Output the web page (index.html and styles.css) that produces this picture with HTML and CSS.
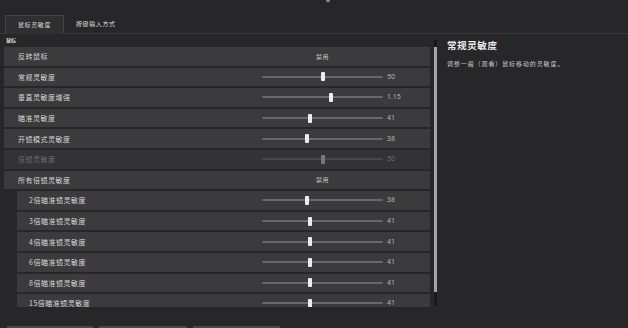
FILE: index.html
```html
<!DOCTYPE html>
<html lang="zh-CN">
<head>
<meta charset="utf-8">
<link rel="stylesheet" href="styles.css">
</head>
<body>
<div class="topbar"><span class="marker"></span></div>
<div class="tabs">
  <div class="tab active">鼠标灵敏度</div>
  <div class="tab">按键输入方式</div>
</div>
<div class="main">
  <div class="left">
    <div class="section-label">鼠标</div>
    <div class="list">
      <div class="row"><span class="label">反转鼠标</span><div class="control"><span class="toggle">禁用</span></div></div>
      <div class="row"><span class="label">常规灵敏度</span><div class="control"><div class="track"><span class="thumb" style="left:50%"></span></div><span class="value">50</span></div></div>
      <div class="row"><span class="label">垂直灵敏度增强</span><div class="control"><div class="track"><span class="thumb" style="left:57%"></span></div><span class="value">1.15</span></div></div>
      <div class="row"><span class="label">瞄准灵敏度</span><div class="control"><div class="track"><span class="thumb" style="left:40%"></span></div><span class="value">41</span></div></div>
      <div class="row"><span class="label">开镜模式灵敏度</span><div class="control"><div class="track"><span class="thumb" style="left:37%"></span></div><span class="value">38</span></div></div>
      <div class="row disabled"><span class="label">倍镜灵敏度</span><div class="control"><div class="track"><span class="thumb" style="left:50%"></span></div><span class="value">50</span></div></div>
      <div class="row"><span class="label">所有倍镜灵敏度</span><div class="control"><span class="toggle">禁用</span></div></div>
      <div class="row sub"><span class="label">2倍瞄准镜灵敏度</span><div class="control"><div class="track"><span class="thumb" style="left:37%"></span></div><span class="value">38</span></div></div>
      <div class="row sub"><span class="label">3倍瞄准镜灵敏度</span><div class="control"><div class="track"><span class="thumb" style="left:40%"></span></div><span class="value">41</span></div></div>
      <div class="row sub"><span class="label">4倍瞄准镜灵敏度</span><div class="control"><div class="track"><span class="thumb" style="left:40%"></span></div><span class="value">41</span></div></div>
      <div class="row sub"><span class="label">6倍瞄准镜灵敏度</span><div class="control"><div class="track"><span class="thumb" style="left:40%"></span></div><span class="value">41</span></div></div>
      <div class="row sub"><span class="label">8倍瞄准镜灵敏度</span><div class="control"><div class="track"><span class="thumb" style="left:40%"></span></div><span class="value">41</span></div></div>
      <div class="row sub"><span class="label">15倍瞄准镜灵敏度</span><div class="control"><div class="track"><span class="thumb" style="left:40%"></span></div><span class="value">41</span></div></div>
    </div>
  </div>
  <div class="scrollbar"><div class="scroll-thumb"></div></div>
  <div class="detail">
    <div class="detail-title">常规灵敏度</div>
    <div class="detail-text">调整一般（观看）鼠标移动的灵敏度。</div>
  </div>
</div>
<div class="footer">
  <span class="fbtn b1"></span>
  <span class="fbtn b2"></span>
  <span class="fbtn b3"></span>
</div>
</body>
</html>
```

FILE: styles.css
```css
* { box-sizing: border-box; }
html, body { margin: 0; padding: 0; }
body {
  width: 628px;
  height: 328px;
  overflow: hidden;
  background: #27272a;
  font-family: "Noto Sans CJK SC", "Noto Sans", "Liberation Sans", sans-serif;
  color: #cfcfcf;
}
.topbar {
  height: 15px;
  position: relative;
}
.marker {
  position: absolute;
  left: 326px;
  top: 0;
  width: 4px;
  height: 2px;
  background: #8a8a8a;
  border-radius: 1px;
}
.tabs {
  height: 19px;
  display: flex;
  align-items: stretch;
  padding-left: 5px;
  border-bottom: 1px solid #3b3b3d;
}
.tab {
  font-size: 6px;
  letter-spacing: 0.6px;
  line-height: 18px;
  padding: 0 10px 0 12px;
  color: #dcdcdc;
  margin-bottom: -1px;
}
.tab.active {
  background: #2f2f32;
  border: 1px solid #444446;
  border-bottom: 1px solid #2f2f32;
  width: 59px;
  padding: 0 0 0 12px;
}
.main {
  height: 292px;
  display: flex;
}
.left {
  width: 430px;
  padding-left: 4px;
  display: flex;
  flex-direction: column;
}
.section-label {
  height: 13px;
  font-size: 5px;
  line-height: 12px;
  padding-left: 2px;
  color: #d8d8d8;
  font-weight: bold;
}
.list {
  height: 260px;
  overflow: hidden;
  display: flex;
  flex-direction: column;
  gap: 2px;
}
.row {
  flex: 0 0 18.6px;
  height: 18.6px;
  background: #3b3b3d;
  display: flex;
  align-items: center;
  justify-content: space-between;
  padding-left: 14px;
}
.row.sub {
  margin-left: 13px;
  padding-left: 12px;
}
.row.disabled {
  background: #333335;
}
.label {
  font-size: 7px;
  letter-spacing: 0.5px;
  color: #d4d4d4;
  white-space: nowrap;
}
.control {
  width: 168px;
  display: flex;
  align-items: center;
}
.track {
  position: relative;
  width: 121px;
  height: 2px;
  background: #68686a;
  border-radius: 1px;
}
.thumb {
  position: absolute;
  top: -3.5px;
  width: 4px;
  height: 9px;
  background: #ececec;
  border-radius: 1px;
  transform: translateX(-50%);
}
.value {
  margin-left: 4px;
  font-size: 7px;
  color: #b0b0b0;
  font-family: "Roboto", "Liberation Sans", sans-serif;
}
.toggle {
  width: 121px;
  text-align: center;
  font-size: 6px;
  letter-spacing: 0.5px;
  color: #c4c4c4;
}
.row.disabled .label,
.row.disabled .value { color: #6c6c6e; }
.row.disabled .track { background: #48484a; }
.row.disabled .thumb { background: #78787a; }
.scrollbar {
  width: 3px;
  margin-left: 4px;
  margin-top: 6px;
  height: 266px;
  background: #18181a;
  display: flex;
  flex-direction: column;
}
.scroll-thumb {
  margin-top: 7px;
  height: 245px;
  background: #a4a4a6;
}
.detail {
  flex: 1;
  padding-left: 10px;
  padding-top: 4px;
}
.detail-title {
  font-size: 9.5px;
  font-weight: bold;
  letter-spacing: 0.6px;
  color: #ececec;
  line-height: 14px;
}
.detail-text {
  margin-top: 7px;
  font-size: 6px;
  letter-spacing: 0.9px;
  color: #c8c8c8;
  line-height: 10px;
}
.footer {
  height: 2px;
  display: flex;
  gap: 6px;
  padding-left: 7px;
}
.fbtn {
  height: 2px;
  background: #4a4a4c;
}
.b1 { width: 86px; }
.b2 { width: 88px; }
.b3 { width: 87px; }
```
